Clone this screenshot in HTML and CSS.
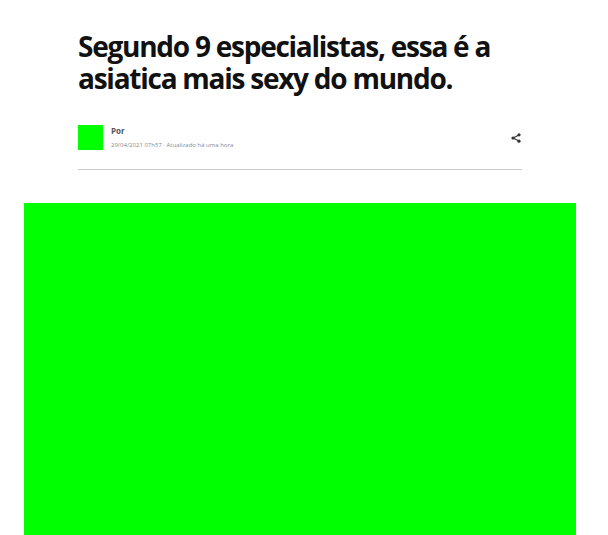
FILE: index.html
```html
<!DOCTYPE html>
<html lang="pt">
<head>
<meta charset="utf-8">
<title>Segundo 9 especialistas</title>
<link rel="stylesheet" href="styles.css">
</head>
<body>
<div class="page">
  <article class="article">
    <header class="head">
      <h1 class="title">Segundo 9 especialistas, essa é a asiatica mais sexy do mundo.</h1>
      <div class="meta">
        <div class="avatar"></div>
        <div class="byline">
          <div class="author">Por</div>
          <div class="date"><span class="pub">29/04/2021 07h57</span> · <span class="upd">Atualizado há uma hora</span></div>
        </div>
        <svg class="share" width="10" height="10" viewBox="0 0 10 10" aria-label="Compartilhar">
          <line x1="8" y1="2" x2="2" y2="5" stroke="#333" stroke-width="1.2"/>
          <line x1="2" y1="5" x2="8" y2="8" stroke="#333" stroke-width="1.2"/>
          <circle cx="8" cy="1.8" r="1.6" fill="#333"/>
          <circle cx="2" cy="5" r="1.6" fill="#333"/>
          <circle cx="8" cy="8.2" r="1.6" fill="#333"/>
        </svg>
      </div>
      <hr class="rule">
    </header>
    <div class="media"></div>
  </article>
</div>
</body>
</html>
```
FILE: styles.css
```css
html, body {
  margin: 0;
  padding: 0;
  background: #fff;
}
.page {
  width: 600px;
  font-family: "Open Sans", "Liberation Sans", sans-serif;
}
.article {
  display: flex;
  flex-direction: column;
  align-items: center;
  padding-top: 30px;
}
.head {
  width: 444px;
}
.title {
  margin: 0;
  font-size: 28px;
  line-height: 32px;
  font-weight: 700;
  letter-spacing: -1.25px;
  color: #111;
}
.meta {
  display: flex;
  align-items: center;
  margin-top: 31px;
  height: 25px;
}
.avatar {
  width: 25px;
  height: 25px;
  background: #00ff00;
  flex: none;
}
.byline {
  flex: 1;
  margin-left: 8px;
  display: flex;
  flex-direction: column;
  gap: 2px;
}
.author {
  font-size: 8px;
  line-height: 12px;
  font-weight: 700;
  color: #555;
}
.date {
  font-size: 6px;
  line-height: 12px;
  color: #8a8a8a;
}
.upd {
  color: #7d8aa0;
}
.share {
  flex: none;
  display: block;
  margin-right: 1px;
}
.rule {
  margin: 19px 0 0;
  border: 0;
  height: 1px;
  background: #cccccc;
}
.media {
  margin-top: 33px;
  width: 552px;
  height: 345px;
  background: #00ff00;
}
```
